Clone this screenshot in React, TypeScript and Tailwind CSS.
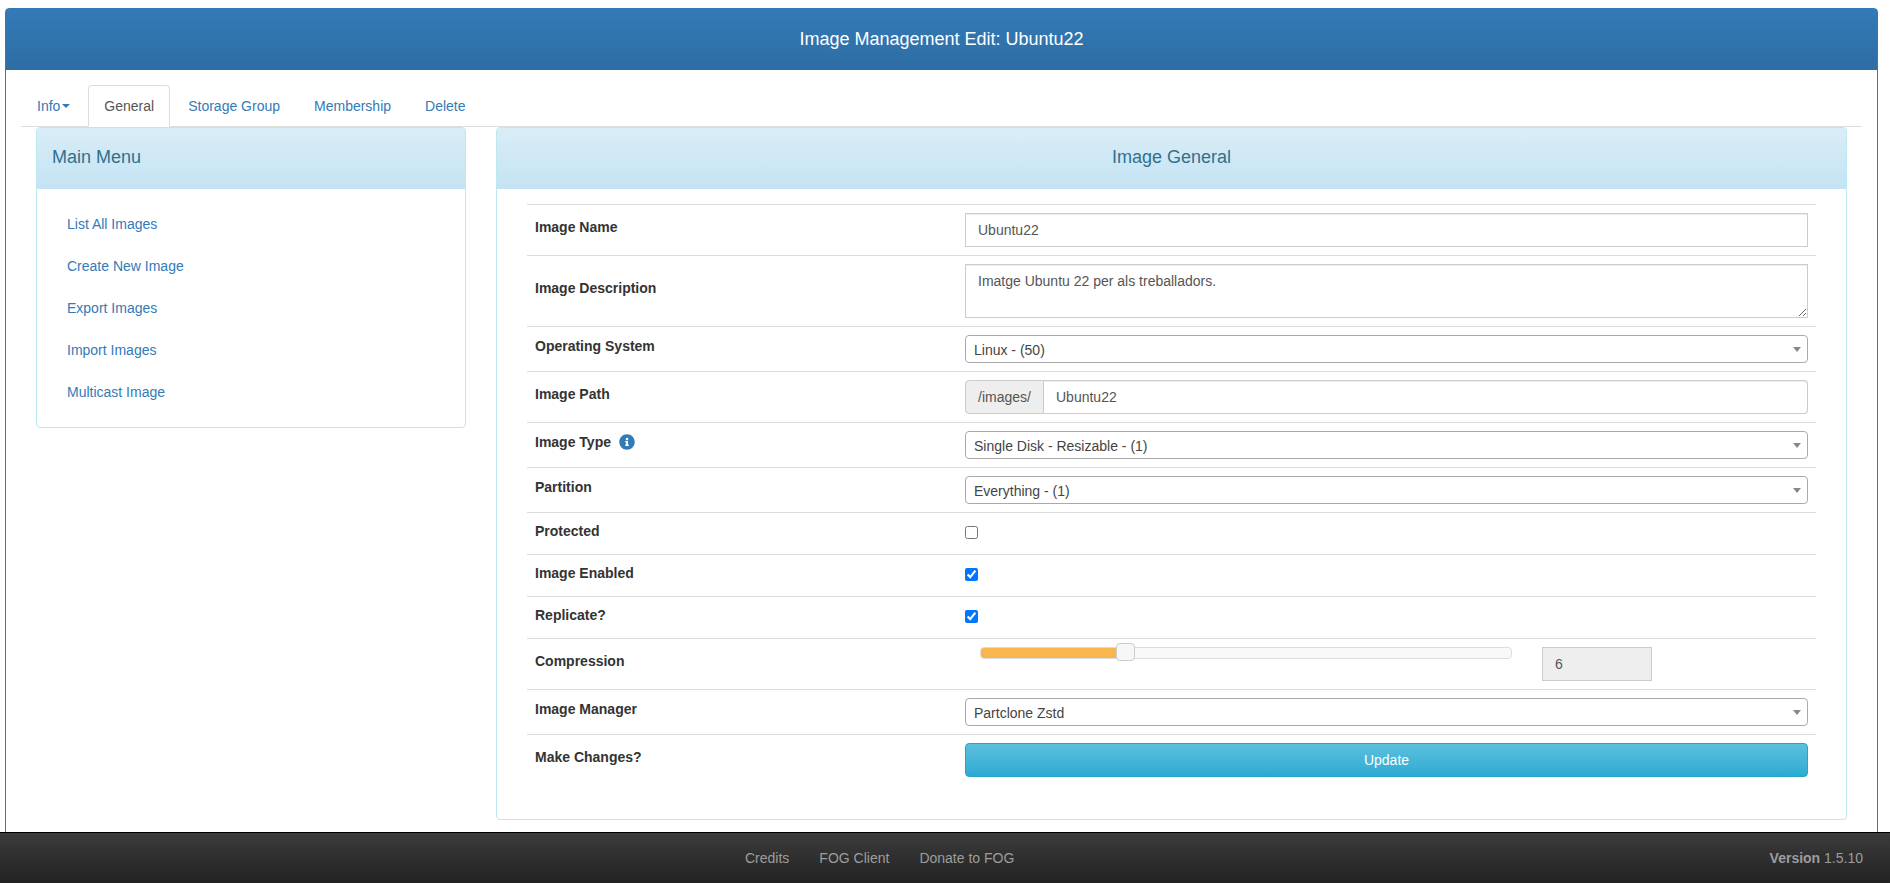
import React from "react";
import { FaInfoCircle } from "react-icons/fa";

const menu = ["List All Images", "Create New Image", "Export Images", "Import Images", "Multicast Image"];
const inputCls =
  "block w-full h-[34px] border border-[#ccc] bg-white px-3 py-[6px] text-sm text-[#555] shadow-[inset_0_1px_1px_rgba(0,0,0,0.075)] outline-none";

function Row({ label, children, icon, flat }: { label: string; children: React.ReactNode; icon?: boolean; flat?: boolean }) {
  return (
    <div className="flex items-center border-t border-[#ddd]">
      <div className="w-[430px] shrink-0 px-2 py-2">
        <div className={flat ? "mb-[5px] flex h-5 items-center text-sm leading-5 font-bold text-[#333]" : "mb-[5px] flex h-5 items-center pb-[2px] text-sm leading-5 font-bold text-[#333]"}>
          <span>{label}</span>
          {icon && <FaInfoCircle className="ml-2 text-[#337ab7]" size={16} />}
        </div>
      </div>
      <div className="min-w-0 flex-1 px-2 py-2">{children}</div>
    </div>
  );
}

function Select({ value }: { value: string }) {
  return (
    <div className="flex h-7 items-center justify-between rounded border border-[#aaa] bg-white pr-[6px] pl-2 text-sm leading-7 text-[#444]">
      <span className="pt-[2px]">{value}</span>
      <span className="h-0 w-0 border-x-4 border-t-[5px] border-x-transparent border-t-[#888]" />
    </div>
  );
}

function Check({ checked }: { checked?: boolean }) {
  return <input type="checkbox" defaultChecked={checked} className="m-0 mb-[2px] block h-[13px] w-[13px]" />;
}

export default function App() {
  return (
    <div className="flex h-[883px] flex-col overflow-hidden bg-white font-['Liberation_Sans',Arial,sans-serif] text-sm text-[#333]">
      <div className="min-h-0 flex-1 overflow-hidden pt-2 pr-[12px] pl-[5px]">
        <div className="min-h-[900px] rounded-t border border-[#337ab7] bg-white">
          <div className="flex h-[61px] items-center justify-center bg-linear-to-b from-[#337ab7] to-[#2e6da4] pb-[2px] text-lg text-white">
            Image Management Edit: Ubuntu22
          </div>
          <div className="px-[15px] pt-[15px]">
            <div className="flex h-[42px] border-b border-[#ddd]">
              <a className="mr-[2px] flex h-[42px] items-center border border-transparent px-[15px] text-[#337ab7]">
                Info
                <span className="ml-[2px] h-0 w-0 border-x-4 border-t-4 border-x-transparent border-t-[#337ab7]" />
              </a>
              <a className="mr-[2px] flex h-[42px] items-center rounded-t border border-[#ddd] border-b-white bg-white px-[15px] text-[#555]">
                General
              </a>
              {["Storage Group", "Membership", "Delete"].map((t) => (
                <a key={t} className="mr-[2px] flex h-[42px] items-center border border-transparent px-[15px] text-[#337ab7]">
                  {t}
                </a>
              ))}
            </div>
            <div className="flex items-start gap-[30px] px-[15px]">
              <div className="w-[430px] shrink-0 overflow-hidden rounded border border-[#bce8f1]">
                <div className="flex h-[61px] items-center bg-linear-to-b from-[#d9edf7] to-[#c4e3f3] px-[15px] pb-1 text-lg text-[#31708f]">
                  Main Menu
                </div>
                <div className="flex flex-col gap-[2px] p-[15px]">
                  {menu.map((m) => (
                    <a key={m} className="block px-[15px] py-[10px] leading-5 text-[#337ab7]">
                      {m}
                    </a>
                  ))}
                </div>
              </div>
              <div className="min-w-0 flex-1 overflow-hidden rounded border border-[#bce8f1]">
                <div className="flex h-[61px] items-center justify-center bg-linear-to-b from-[#d9edf7] to-[#c4e3f3] pb-1 text-lg text-[#31708f]">
                  Image General
                </div>
                <div className="px-[30px] pt-[15px] pb-[34px]">
                  <Row label="Image Name">
                    <input className={inputCls} defaultValue="Ubuntu22" />
                  </Row>
                  <Row label="Image Description">
                    <textarea
                      className="block h-[54px] w-full border border-[#ccc] bg-white px-3 py-[6px] text-sm leading-5 text-[#555] shadow-[inset_0_1px_1px_rgba(0,0,0,0.075)] outline-none"
                      defaultValue="Imatge Ubuntu 22 per als treballadors."
                    />
                  </Row>
                  <Row label="Operating System">
                    <Select value="Linux - (50)" />
                  </Row>
                  <Row label="Image Path">
                    <div className="flex h-[34px]">
                      <span className="flex w-[79px] shrink-0 items-center justify-center rounded-l border border-[#ccc] bg-[#eee] text-sm text-[#555]">
                        /images/
                      </span>
                      <input
                        className="h-[34px] min-w-0 flex-1 rounded-r border border-l-0 border-[#ccc] bg-white px-3 py-[6px] text-sm text-[#555] shadow-[inset_0_1px_1px_rgba(0,0,0,0.075)] outline-none"
                        defaultValue="Ubuntu22"
                      />
                    </div>
                  </Row>
                  <Row label="Image Type" icon>
                    <Select value="Single Disk - Resizable - (1)" />
                  </Row>
                  <Row label="Partition">
                    <Select value="Everything - (1)" />
                  </Row>
                  <Row label="Protected" flat>
                    <Check />
                  </Row>
                  <Row label="Image Enabled" flat>
                    <Check checked />
                  </Row>
                  <Row label="Replicate?" flat>
                    <Check checked />
                  </Row>
                  <Row label="Compression">
                    <div className="flex items-start pl-[15px]">
                      <div className="relative h-3 w-[532px] rounded border border-[#ddd] bg-[#f9f9f9]">
                        <div className="h-full w-[136px] rounded-l-[3px] bg-[#f9b64f]" />
                        <div className="absolute top-[-5px] left-[135px] h-[18px] w-[19px] rounded border border-[#ccc] bg-[#f7f7f7]" />
                      </div>
                      <input
                        disabled
                        className="ml-[30px] block h-[34px] w-[110px] border border-[#ccc] bg-[#eee] px-3 py-[6px] text-sm text-[#555] outline-none"
                        defaultValue="6"
                      />
                    </div>
                  </Row>
                  <Row label="Image Manager">
                    <Select value="Partclone Zstd" />
                  </Row>
                  <Row label="Make Changes?">
                    <button className="block h-[34px] w-full rounded border border-[#28a4c9] bg-linear-to-b from-[#5bc0de] to-[#2aabd2] text-sm text-white">
                      Update
                    </button>
                  </Row>
                </div>
              </div>
            </div>
          </div>
        </div>
      </div>
      <div className="flex h-[51px] shrink-0 items-center border-t border-black bg-linear-to-b from-[#3c3c3c] to-[#222] text-sm text-[#9d9d9d]">
        <nav className="ml-[730px] flex">
          {["Credits", "FOG Client", "Donate to FOG"].map((t) => (
            <a key={t} className="px-[15px]">
              {t}
            </a>
          ))}
        </nav>
        <div className="mr-[27px] ml-auto">
          <b>Version</b> 1.5.10
        </div>
      </div>
    </div>
  );
}
